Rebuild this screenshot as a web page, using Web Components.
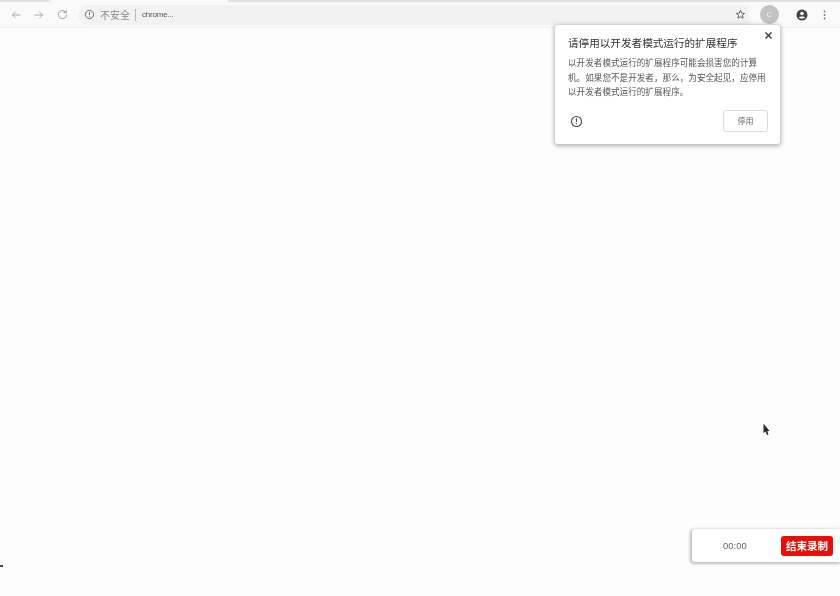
<!DOCTYPE html>
<html><head><meta charset="utf-8"><style>
html,body{margin:0;height:596px;overflow:hidden;background:#fefdfe}
body{font-family:"Liberation Sans","Noto Sans CJK SC",sans-serif;display:flex;flex-direction:column;position:relative;width:840px;filter:blur(.35px)}
</style></head><body>
<browser-toolbar></browser-toolbar>
<page-canvas></page-canvas>
<dev-bubble></dev-bubble>
<record-bar></record-bar>
<script>
function def(name,html){customElements.define(name,class extends HTMLElement{constructor(){super();this.attachShadow({mode:'open'}).innerHTML=html}})}
const stroke='fill="none" stroke-linecap="round" stroke-linejoin="round"';
def('browser-toolbar',`<style>
:host{display:block;height:28px;box-sizing:border-box;background:#fbfafb;border-bottom:1px solid #efefef;flex:none;font-family:"Liberation Sans","Noto Sans CJK SC",sans-serif}
.tabs{display:grid;grid-template-columns:50px 178px 1fr;height:2px}
.tabs i{background:#e2e2e2}.tabs i:nth-child(2){background:#fbfafb}
.row{display:flex;align-items:center;height:25px}
.nav{display:flex;align-items:center;gap:13px;margin-left:11px;width:67px}
svg{display:block;flex:none}
.omni{width:671px;height:20px;background:#f3f2f3;border-radius:10px 0 0 10px;display:flex;align-items:center;padding-left:6px;box-sizing:border-box;font-size:10px;color:#888}
.sec{margin-left:5px}.sep{width:1px;height:12px;background:#bbb;margin:0 6px 0 5px}
.url{font-size:8px;color:#555;letter-spacing:-.2px}
.star{margin-left:auto;margin-right:3px}
.av{width:19px;height:19px;border-radius:50%;background:#c4c2c4;color:#eee;font-size:8px;display:flex;align-items:center;justify-content:center;margin-left:11px}
.acct{margin-left:17px}.menu{margin-left:15px}
</style>
<div class="tabs"><i></i><i></i><i></i></div>
<div class="row">
<div class="nav">
<svg width="10" height="10" viewBox="0 0 10 10" ${stroke} stroke="#aaa" stroke-width="1"><path d="M9 5H1.500M4.500 2 1.500 5 4.500 8"/></svg>
<svg width="10" height="10" viewBox="0 0 10 10" ${stroke} stroke="#aaa" stroke-width="1"><path d="M1 5h7.500M5.500 2 8.500 5 5.500 8"/></svg>
<svg width="11" height="11" viewBox="0 0 12 12" ${stroke} stroke="#999" stroke-width="1"><path d="M10 4A4.500 4.500 0 1 0 10.500 6.500M10 1.500V4H7.500"/></svg>
</div>
<div class="omni">
<svg width="11" height="11" viewBox="0 0 12 12" fill="none" stroke="#666" stroke-width="1"><circle cx="6" cy="6" r="4.500"/><path d="M6 3.200v3.300M6 7.700v1"/></svg>
<span class="sec">不安全</span><span class="sep"></span><span class="url">chrome...</span>
<svg class="star" width="11" height="11" viewBox="0 0 12 12" fill="none" stroke="#555" stroke-width="1" stroke-linejoin="round"><path d="M6 1.500 7.300 4.500 10.500 4.800 8.100 6.900 8.800 10 6 8.400 3.200 10 3.900 6.900 1.500 4.800 4.700 4.500Z"/></svg>
</div>
<div class="av">C</div>
<svg class="acct" width="12" height="12" viewBox="0 0 12 12"><circle cx="6" cy="6" r="5.500" fill="#444"/><circle cx="6" cy="4.500" r="1.800" fill="#fbfafb"/><path d="M2.800 8.600C4 7.200 8 7.200 9.200 8.600 7.800 10 4.200 10 2.800 8.600Z" fill="#fbfafb"/></svg>
<svg class="menu" width="3" height="12" viewBox="0 0 3 12" fill="#777"><circle cx="1.500" cy="2.500" r=".9"/><circle cx="1.500" cy="6" r=".9"/><circle cx="1.500" cy="9.500" r=".9"/></svg>
</div>`);
def('page-canvas',`<style>:host{display:block;flex:1;background:#fefdfe;position:relative}
.tick{position:absolute;left:0;top:537px;width:3px;height:1.500px;background:#444}
.cur{position:absolute;left:762px;top:395px}</style>
<div class="tick"></div>
<svg class="cur" width="9" height="13" viewBox="0 0 9 13"><path d="M1.500 .5 7.500 8H5.300L6.500 11.500 5 12 3.600 8.500 1.500 10Z" fill="#2a2a2a"/></svg>`);
def('dev-bubble',`<style>
:host{position:absolute;left:555px;top:25px;width:225px;height:119px;box-sizing:border-box;background:#fff;border-radius:3px;box-shadow:0 1px 4px 1px rgba(0,0,0,.3);padding:11px 13px 0 13px;display:flex;flex-direction:column;color:#444;font-family:"Liberation Sans","Noto Sans CJK SC",sans-serif}
.x{position:absolute;right:7px;top:6px}
h1{margin:0;font-size:10.600px;font-weight:400;line-height:14px;color:#333;white-space:nowrap}
p{margin:6px 0 0;font-size:8.600px;line-height:14.500px;color:#555;width:199px}
.foot{display:flex;align-items:center;justify-content:space-between;margin-top:10px}
.foot svg{margin-left:2px;margin-top:1px}
button{all:unset;width:45px;height:22px;border:1px solid #dadada;border-radius:3px;text-align:center;font-size:8px;line-height:21px;color:#666;box-sizing:border-box;margin-right:-1px}
</style>
<svg class="x" width="9" height="9" viewBox="0 0 9 9" stroke="#333" stroke-width="1.300"><path d="M1.500 1.500l6 6M7.500 1.500l-6 6"/></svg>
<h1>请停用以开发者模式运行的扩展程序</h1>
<p>以开发者模式运行的扩展程序可能会损害您的计算机。如果您不是开发者，那么，为安全起见，应停用以开发者模式运行的扩展程序。</p>
<div class="foot">
<svg width="13" height="13" viewBox="0 0 13 13" fill="none" stroke="#444" stroke-width="1.100"><circle cx="6.500" cy="6.500" r="5"/><path d="M6.500 3.500v3.500M6.500 8.200v1"/></svg>
<button>停用</button></div>`);
def('record-bar',`<style>
:host{position:absolute;left:692px;top:529px;width:148px;height:33px;box-sizing:border-box;background:#fff;border-radius:3px 0 0 3px;box-shadow:-1px 1px 3px 1px rgba(0,0,0,.25);display:flex;align-items:center;padding:0 7px 0 31px;justify-content:space-between;font-family:"Liberation Sans","Noto Sans CJK SC",sans-serif}
.t{font-size:9.500px;color:#666}
.b{width:52px;height:20px;background:#e80f06;border-radius:3px;color:#fff;font-size:10.500px;font-weight:700;text-align:center;line-height:20px;white-space:nowrap}
</style><span class="t">00:00</span><span class="b">结束录制</span>`);
</script>
</body></html>
